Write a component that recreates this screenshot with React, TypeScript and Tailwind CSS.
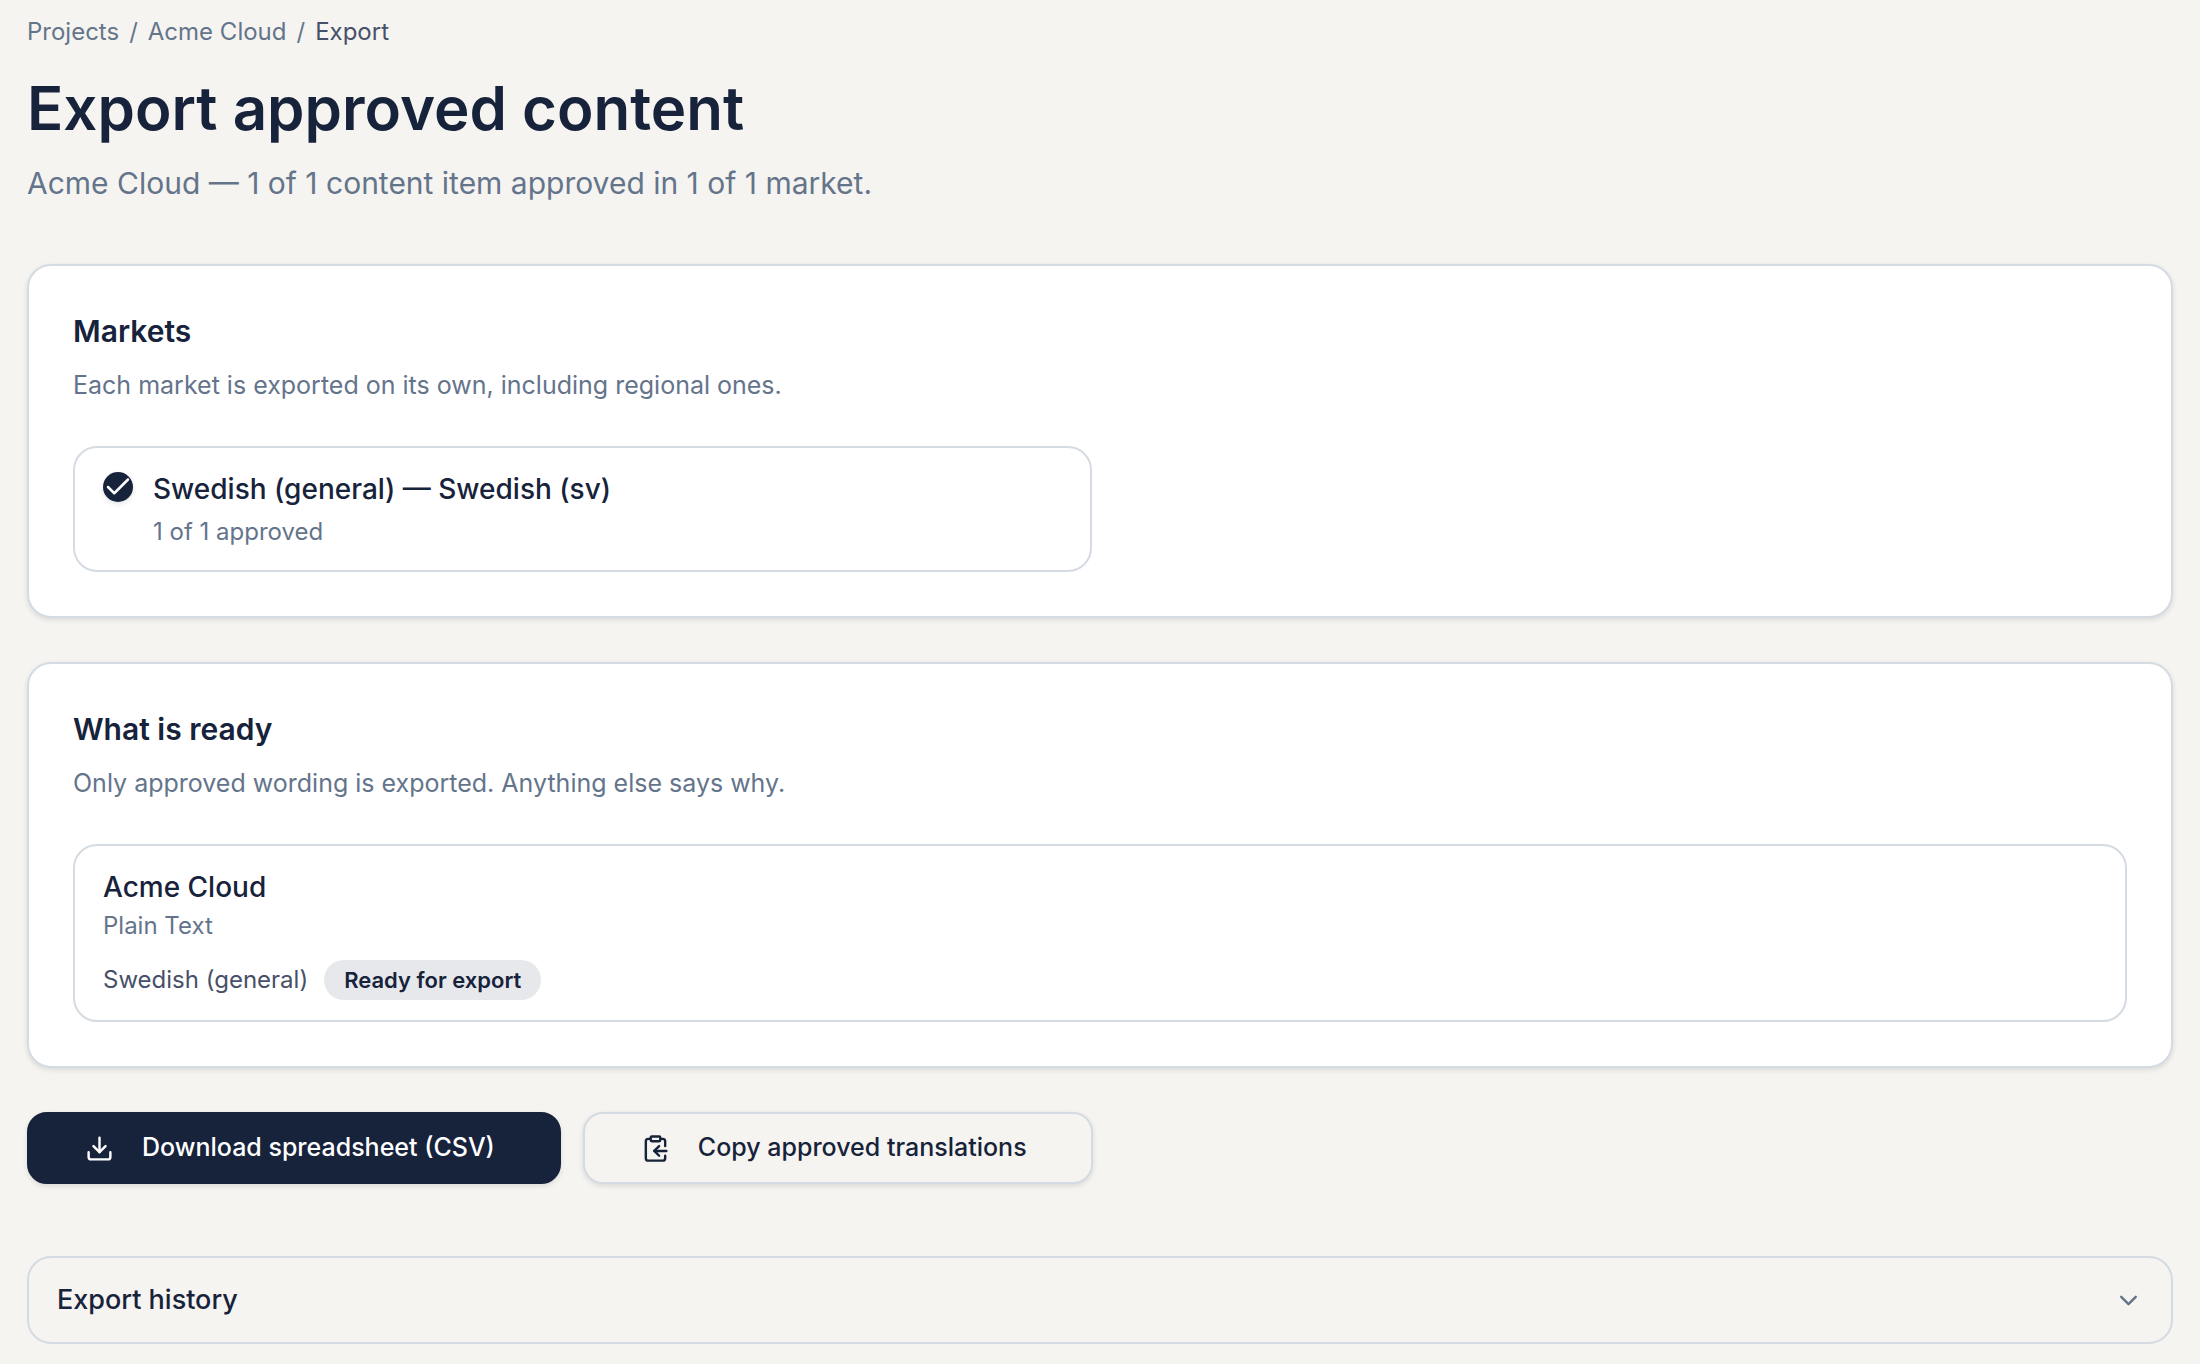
import React from 'react';
import { Check, ChevronDown, ClipboardCopy, Download } from 'lucide-react';

const App = () => {
  return (
    <main className="min-h-screen bg-[#f5f4f0] px-[27px] pt-4 pb-6 font-['Inter',sans-serif] text-[#17223b]">
      <nav aria-label="Breadcrumb" className="flex gap-2.5 text-2xl text-[#64748b]">
        <a href="#projects">Projects</a>
        <span>/</span>
        <a href="#acme-cloud">Acme Cloud</a>
        <span>/</span>
        <span aria-current="page" className="text-[#475069]">Export</span>
      </nav>

      <header className="mt-6">
        <h1 className="text-6xl leading-[72px] font-semibold">Export approved content</h1>
        <p className="mt-4 text-3xl leading-[46px] text-[#64748b]">
          Acme Cloud — 1 of 1 content item approved in 1 of 1 market.
        </p>
      </header>

      <section className="mt-[58px] rounded-3xl border-2 border-[#d5dbe2] bg-white p-11 shadow-[0_2px_5px_rgba(23,34,59,0.12)]">
        <h2 className="text-3xl leading-[42px] font-semibold">Markets</h2>
        <p className="mt-3 text-[25px] leading-[42px] text-[#64748b]">
          Each market is exported on its own, including regional ones.
        </p>
        <div className="mt-10 grid grid-cols-2 gap-4">
          <label className="flex gap-5 rounded-3xl border-2 border-[#d5dbe2] px-7 py-5">
            <span className="relative mt-1 size-[30px] shrink-0">
              <input type="checkbox" defaultChecked className="block size-full appearance-none rounded-full bg-[#17223b] shadow-[0_2px_5px_rgba(23,34,59,0.12)]" />
              <Check className="pointer-events-none absolute inset-0 size-[30px] text-white" />
            </span>
            <span>
              <span className="block text-[28px] leading-[42px] font-medium">Swedish (general) — Swedish (sv)</span>
              <span className="mt-1 block text-2xl leading-[36px] text-[#64748b]">1 of 1 approved</span>
            </span>
          </label>
        </div>
      </section>

      <section className="mt-11 rounded-3xl border-2 border-[#d5dbe2] bg-white p-11 shadow-[0_2px_5px_rgba(23,34,59,0.12)]">
        <h2 className="text-3xl leading-[42px] font-semibold">What is ready</h2>
        <p className="mt-3 text-[25px] leading-[42px] text-[#64748b]">
          Only approved wording is exported. Anything else says why.
        </p>
        <div className="mt-10 rounded-3xl border-2 border-[#d5dbe2] px-7 py-5">
          <h3 className="text-[28px] leading-[42px] font-medium">Acme Cloud</h3>
          <p className="text-2xl leading-[36px] text-[#64748b]">Plain Text</p>
          <div className="mt-4 flex items-center gap-4">
            <span className="text-2xl text-[#475069]">Swedish (general)</span>
            <span className="rounded-full bg-[#e7e8ec] px-5 text-[22px] leading-[40px] font-semibold">Ready for export</span>
          </div>
        </div>
      </section>

      <div className="mt-11 flex gap-[22px]">
        <button type="button" className="flex h-[72px] items-center gap-7 rounded-[20px] border-2 border-[#17223b] bg-[#17223b] pr-16 pl-14 text-[25px] font-medium text-white shadow-[0_2px_5px_rgba(23,34,59,0.12)]">
          <Download className="size-[29px]" />
          Download spreadsheet (CSV)
        </button>
        <button type="button" className="flex h-[72px] items-center gap-7 rounded-[20px] border-2 border-[#d5dbe2] bg-[#f5f4f0] pr-16 pl-14 text-[25px] font-medium shadow-[0_2px_5px_rgba(23,34,59,0.12)]">
          <ClipboardCopy className="size-[29px]" />
          Copy approved translations
        </button>
      </div>

      <button type="button" aria-expanded="false" className="mt-[72px] flex h-[88px] w-full items-center justify-between rounded-3xl border-2 border-[#d5dbe2] px-7 text-[27px] font-medium">
        Export history
        <ChevronDown className="size-[29px] text-[#64748b]" />
      </button>
    </main>
  );
};

export default App;
